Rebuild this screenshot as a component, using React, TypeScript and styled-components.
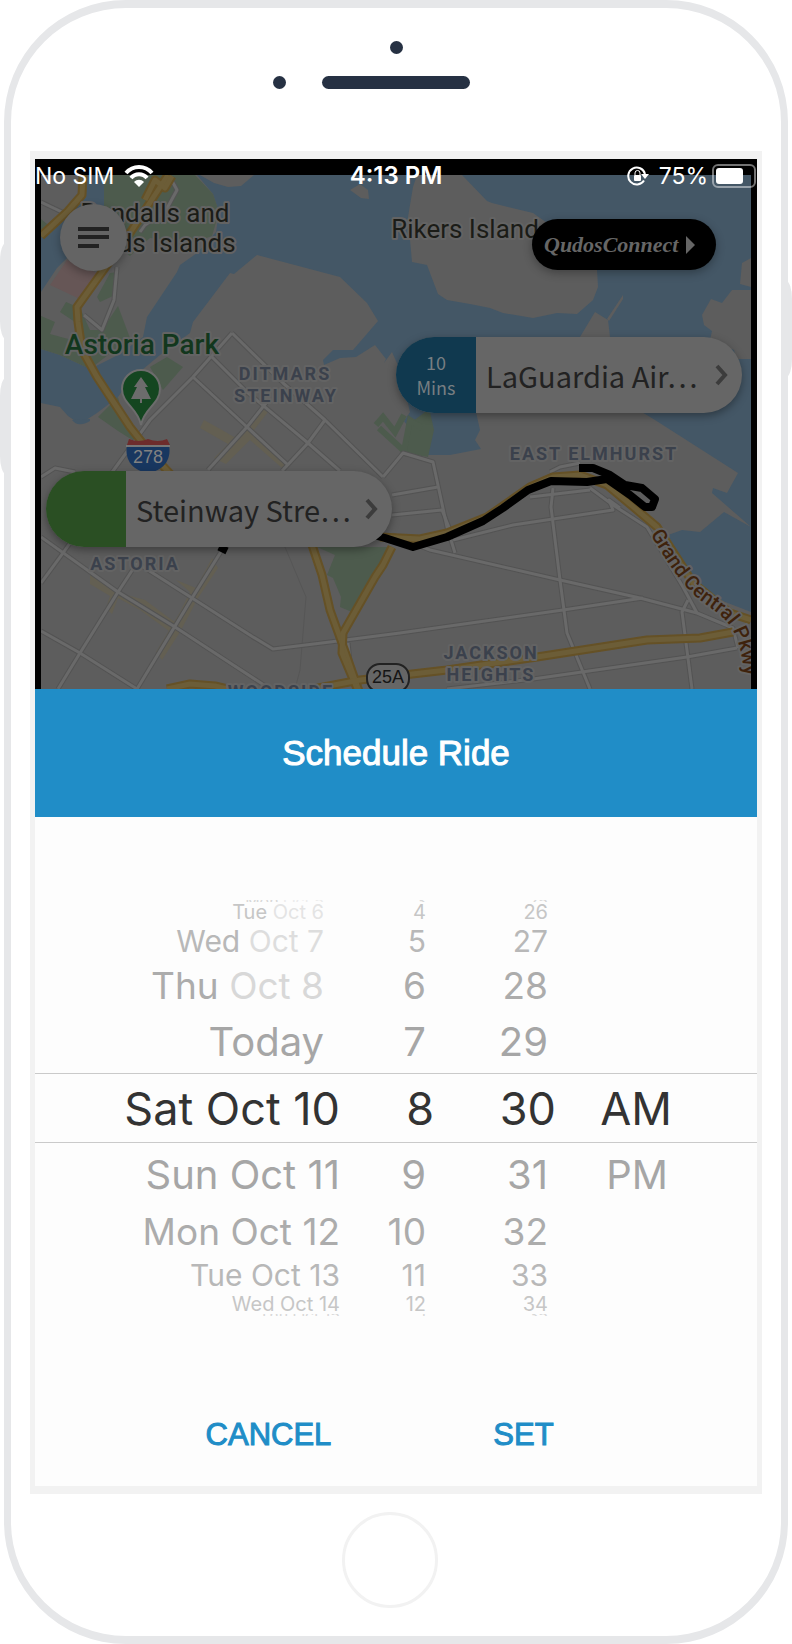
import styled, { createGlobalStyle } from 'styled-components';

interface WheelItem {
  text: string;
  past?: string;
}

interface WheelData {
  label: string;
  insetAbove: number;
  insetBelow: number;
  items: WheelItem[];
}

// items run from five rows above the selection to five rows below it
const wheels: WheelData[] = [
  {
    label: 'Date',
    insetAbove: 16,
    insetBelow: 0,
    items: [
      { text: 'Mon', past: 'Oct 5' },
      { text: 'Tue', past: 'Oct 6' },
      { text: 'Wed', past: 'Oct 7' },
      { text: 'Thu', past: 'Oct 8' },
      { text: 'Today' },
      { text: 'Sat Oct 10' },
      { text: 'Sun Oct 11' },
      { text: 'Mon Oct 12' },
      { text: 'Tue Oct 13' },
      { text: 'Wed Oct 14' },
      { text: 'Thu Oct 15' }
    ]
  },
  {
    label: 'Hour',
    insetAbove: 8,
    insetBelow: 8,
    items: ['3', '4', '5', '6', '7', '8', '9', '10', '11', '12', '1'].map((text) => ({ text }))
  },
  {
    label: 'Minute',
    insetAbove: 8,
    insetBelow: 8,
    items: ['25', '26', '27', '28', '29', '30', '31', '32', '33', '34', '35'].map((text) => ({ text }))
  },
  {
    label: 'AM or PM',
    insetAbove: 4,
    insetBelow: 4,
    items: ['', '', '', '', '', 'AM', 'PM', '', '', '', ''].map((text) => ({ text }))
  }
];

const rowHeights = [70, 63, 50, 38, 20, 2];
const rowSizes = [45, 40, 37, 30, 20, 16];
const rowColors = ['#333333', '#a6a6a6', '#acacac', '#b8b8b8', '#c6c6c6', '#d8d8d8'];

const water = '#445766';
const land = '#5d5d5d';
const green = '#4d5b4d';

const landShapes = [
  'M41 175H84L82 195 68 209 41 230Z',
  'M104 175H197L213 194 219 212 216 232 197 253 180 265 177 272 147 317 143 337 118 355 90 369 60 355 41 349V292L57 268 75 250 104 225Z',
  'M41 403 60 407 68 416 80 424 97 413 118 397 130 380 160 355 190 333 193 322 230 273 234 274 257 255 340 277 367 303 378 321 353 350H333L323 360 324 365 340 358 356 357 375 345 386 359 384 363 392 352 400 370 410 412 404 421 428 455 450 455 481 449 475 440 480 430 476 412V380L580 337 595 312 608 320 610 337 630 405 655 420 738 473 727 493 713 488 712 493 751 527 724 512 700 532 682 530 668 535 690 575 705 590 720 600 751 612V689H41Z',
  'M417 175H462L487 201 492 203 533 213 557 230 597 270 598 287 593 300 577 314 557 313 533 318 503 313 490 308 470 304 447 300 438 294 427 265 412 262 408 217 413 187Z',
  'M200 175 214 183 228 187 241 186 254 175Z',
  'M350 190 360 184 368 190 369 199 361 198Z',
  'M751 258 742 263 740 284 751 287Z',
  'M751 290H732L722 303 711 299 702 315 704 325 712 331 710 340 734 350 736 359H751Z',
  'M607 319 623 295V299L609 321Z'
];

const parks = [
  'M104 175H195L213 194 219 212 212 236 195 242 150 238 130 256 122 250 104 222Z',
  'M41 219 52 228 41 238Z',
  'M41 316 55 322 50 334 72 340 78 324 60 312 66 302 80 308 90 330 102 330 118 306 130 338 90 369 60 355 41 349Z',
  'M97 297 110 273 118 272 113 296 100 302Z',
  'M150 367 167 357 183 367 163 390Z',
  'M98 417 118 397 124 422 142 446 118 431Z',
  'M317 547H388L380 567 352 612 340 607 341 597 333 578 327 575 335 555Z',
  'M425 412H430L434 430 428 457 404 453 408 425Z'
];

const plazas = [
  'M204 420 222 430 234 437 248 425 260 408 268 412 254 430 290 465 282 468 250 440 226 464 214 458 228 444 200 428Z',
  'M90 575 116 592 145 600 180 626 176 636 140 610 118 598 112 614 106 608 110 596 90 584Z',
  'M212 558 218 568 198 598 180 632 162 660 156 652 180 612 190 592 176 580 196 588Z'
];

const streets = [
  'M41 537 118 592 175 627 270 689',
  'M137 563 192 598 253 637 273 649 330 642 400 633 563 610 643 598',
  'M222 550 192 598 137 689',
  'M137 563 118 592 80 653 58 689',
  'M70 543 63 553 41 583',
  'M41 631 80 653 137 689',
  'M232 333 283 383 325 420 383 477',
  'M232 333 193 377 150 420 105 482',
  'M212 357 247 392 308 443 340 471',
  'M193 377 247 427 288 465',
  'M325 420 308 443 282 471',
  'M270 398 247 427 208 470',
  'M383 477 403 453 433 462 447 527 455 553',
  'M392 495 438 487',
  'M392 515 442 510 452 535',
  'M392 535 430 550 560 580 640 598 697 613 733 628 738 648',
  'M453 540 513 525 613 510 609 500 620 508',
  'M553 488 551 507 560 580 567 633 590 689',
  'M590 488 613 505 647 527 683 587 697 613',
  'M688 600 682 612 692 689',
  'M447 689 533 679 687 657 737 648',
  'M530 497 590 490',
  'M550 472 560 467 580 463',
  'M41 477 55 468 75 472',
  'M41 202 64 213',
  'M348 643 352 680',
  'M171 179 177 190 165 212 145 225 140 232',
  'M117 267 114 300 102 330 84 315'
];

const highways = [
  'M41 236 68 211 82 195 83 175',
  'M168 175 130 233 100 275 77 307 78 322 82 350 97 377 130 427 148 450 174 478',
  'M145 200 155 180 165 188 172 176',
  'M312 545 322 575 330 610 347 657 359 691',
  'M392 547 383 565 375 577 343 633 342 653 358 691',
  'M167 689 190 684 215 686 240 692',
  'M313 689 360 680 447 670 537 657 647 640 700 638 733 632',
  'M380 537 420 539 447 533 487 517 530 487 553 477 580 475 607 485 637 510 657 527 693 583 730 613 751 620'
];

const ride =
  'M340 526 385 538 413 547 447 537 483 521 503 508 528 490 551 481 587 482 607 479 630 495 645 507 652 507 655 499 642 488 625 485 610 475 593 468H579';

const Map = () => (
  <MapSvg viewBox="41 175 710 514" preserveAspectRatio="xMidYMin slice" role="img" aria-label="Ride map">
    <rect x="41" y="175" width="710" height="514" fill={water} />
    {landShapes.map((d) => (
      <path key={d} d={d} fill={land} />
    ))}
    {parks.map((d) => (
      <path key={d} d={d} fill={green} />
    ))}
    <path d="M376 425 383 417 395 432 404 415M379 428 404 451 410 420 422 428" fill="none" stroke={green} strokeWidth="6" />
    <path d="M67 260 97 273 82 300 50 285Z" fill="#665656" />
    <path d="M72 420Q78 428 90 421V419Z" fill={water} />
    {plazas.map((d) => (
      <path key={d} d={d} fill="#635f52" />
    ))}
    <path d="M285 547 306 597 300 670 295 689" fill="none" stroke="#565656" />
    <g fill="none" strokeLinejoin="round">
      {streets.map((d) => (
        <path key={d} d={d} stroke="#535353" strokeWidth="5" />
      ))}
      {streets.map((d) => (
        <path key={d} d={d} stroke="#696969" strokeWidth="3" />
      ))}
      {highways.map((d) => (
        <path key={d} d={d} stroke="#655126" strokeWidth="9" />
      ))}
      {highways.map((d) => (
        <path key={d} d={d} stroke="#6c5d37" strokeWidth="5" />
      ))}
      <path d={ride} stroke="#000" strokeWidth="8" />
      <path d="M219 547 227 551" stroke="#000" strokeWidth="7" />
    </g>

    <PlaceName x="155" y="222">Randalls and</PlaceName>
    <PlaceName x="154" y="252">Wards Islands</PlaceName>
    <PlaceName x="465" y="238">Rikers Island</PlaceName>
    <ParkName x="142" y="354">Astoria Park</ParkName>
    <AreaName x="285" y="380">DITMARS</AreaName>
    <AreaName x="286" y="402">STEINWAY</AreaName>
    <AreaName x="594" y="460">EAST ELMHURST</AreaName>
    <AreaName x="135" y="570">ASTORIA</AreaName>
    <AreaName x="491" y="659">JACKSON</AreaName>
    <AreaName x="491" y="681">HEIGHTS</AreaName>
    <AreaName x="281" y="698">WOODSIDE</AreaName>

    <path id="parkway" d="M650 534C664 556 674 574 690 591 704 606 722 612 732 629 740 642 743 658 746 690" fill="none" />
    <RoadName>
      <textPath href="#parkway">Grand Central Pkwy</textPath>
    </RoadName>

    {/* park pin */}
    <path d="M141 425C138 408 122 404 122 389A19 19 0 0 1 160 389C160 404 144 408 141 425Z" fill="#144620" stroke="#6c6c6c" strokeWidth="2" />
    <path d="M141 377 148 387H145L151 399H142V403H140V399H131L137 387H134Z" fill="#6c6c6c" />

    {/* interstate shield */}
    <path d="M127 445H169C172 461 162 471 148 473C134 471 124 461 127 445Z" fill="#183760" />
    <path d="M129 439Q139 443 148 439 158 443 167 439L170 445H127Z" fill="#6d2c2c" />
    <path d="M126 446H170" stroke="#777" strokeWidth="2" />
    <ShieldText x="148" y="463" fill="#818181">278</ShieldText>

    <rect x="367" y="664" width="42" height="28" rx="13" fill="#666" stroke="#222" strokeWidth="2" />
    <ShieldText x="388" y="683" fill="#151515">25A</ShieldText>
  </MapSvg>
);

const WifiIcon = () => (
  <svg width="30" height="22" viewBox="0 0 30 22" fill="none" stroke="#fff" strokeWidth="4" aria-hidden="true">
    <path d="M2 8C9 0 21 0 28 8" />
    <path d="M7 13C11 8 19 8 23 13" />
    <path d="M10 17C13 14 17 14 20 17L15 22Z" fill="#fff" stroke="none" />
  </svg>
);

const LockIcon = () => (
  <svg width="22" height="20" viewBox="0 0 22 20" fill="none" aria-hidden="true">
    <path d="M17 14.5A8.5 8.5 0 1 1 18 8" stroke="#fff" strokeWidth="2" />
    <path d="M14 8H22L18 13Z" fill="#fff" />
    <rect x="7" y="9" width="7" height="6" rx="1" fill="#fff" />
    <path d="M8 9V7A2.5 2.5 0 0 1 13 7V9" stroke="#fff" />
  </svg>
);

const BatteryIcon = () => (
  <svg width="44" height="24" viewBox="0 0 44 24" fill="none" aria-hidden="true">
    <rect x="1" y="1" width="42" height="22" rx="5" stroke="#fff" strokeOpacity="0.45" strokeWidth="2" />
    <rect x="4" y="4" width="27" height="16" rx="3" fill="#fff" />
  </svg>
);

const Chevron = () => (
  <svg width="14" height="22" viewBox="0 0 14 22" fill="none" stroke="#3c3c3c" strokeWidth="4" aria-hidden="true">
    <path d="M2 2 10 11 2 20" />
  </svg>
);

const Wheel = ({ label, insetAbove, insetBelow, items }: WheelData) => (
  <WheelList aria-label={label}>
    {items.map((item, index) => (
      <WheelRow
        key={index}
        $distance={Math.abs(index - 5)}
        $inset={index < 5 ? insetAbove : index > 5 ? insetBelow : 0}
      >
        {item.text}
        {item.past && <Past> {item.past}</Past>}
      </WheelRow>
    ))}
  </WheelList>
);

const App = () => (
  <>
    <GlobalStyle />
    <Phone>
      <SideKey $side="left" $top={235} />
      <SideKey $side="left" $top={370} />
      <SideKey $side="right" $top={273} />
      <PhoneTop>
        <Dot />
        <SpeakerRow>
          <Dot />
          <Speaker />
        </SpeakerRow>
      </PhoneTop>
      <Screen>
        <MapPane>
          <Map />
          <StatusBar>
            <StatusGroup>
              No SIM
              <WifiIcon />
            </StatusGroup>
            <Clock>4:13 PM</Clock>
            <StatusEnd>
              <LockIcon />
              <Charge>
                75%
                <BatteryIcon />
              </Charge>
            </StatusEnd>
          </StatusBar>
          <MenuButton type="button" aria-label="Menu">
            <svg width="31" height="21" viewBox="0 0 31 21" stroke="#222" strokeWidth="4" aria-hidden="true">
              <path d="M0 2H31M0 10H31M0 19H21" />
            </svg>
          </MenuButton>
          <ConnectButton type="button">
            QudosConnect
            <svg width="9" height="18" viewBox="0 0 9 18" fill="#666" aria-hidden="true">
              <path d="M0 0 9 9 0 18Z" />
            </svg>
          </ConnectButton>
          <Dropoff type="button">
            <Tag $color="#10394f">
              <span>10</span>
              <span>Mins</span>
            </Tag>
            <StopName>LaGuardia Air…</StopName>
            <Chevron />
          </Dropoff>
          <Pickup type="button">
            <Tag $color="#2a4f23" />
            <StopName>Steinway Stre…</StopName>
            <Chevron />
          </Pickup>
        </MapPane>
        <Title>Schedule Ride</Title>
        <Picker>
          {wheels.map((wheel) => (
            <Wheel key={wheel.label} {...wheel} />
          ))}
        </Picker>
        <Actions>
          <ActionButton type="button">CANCEL</ActionButton>
          <ActionButton type="button">SET</ActionButton>
        </Actions>
      </Screen>
      <PhoneBottom>
        <HomeButton type="button" aria-label="Home" />
      </PhoneBottom>
    </Phone>
  </>
);

export default App;

const GlobalStyle = createGlobalStyle`
  *,
  *::after {
    box-sizing: border-box;
  }

  body {
    margin: 0;
    background: #fff;
    font-family: Inter, 'Liberation Sans', sans-serif;
  }

  button {
    margin: 0;
    padding: 0;
    border: 0;
    background: none;
    cursor: pointer;
  }
`;

const Phone = styled.main`
  position: relative;
  margin: 0 4px;
  border: solid #e6e7e9;
  border-width: 8px 7px;
  border-radius: 122px;
  background: #fff;
`;

const SideKey = styled.span<{ $side: 'left' | 'right'; $top: number }>`
  position: absolute;
  top: ${({ $top }) => $top}px;
  ${({ $side }) => $side}: -11px;
  width: 6px;
  height: 96px;
  border-radius: ${({ $side }) => ($side === 'left' ? '6px 0 0 6px / 18px 0 0 18px' : '0 6px 6px 0 / 0 18px 18px 0')};
  background: #e6e7e9;
`;

const PhoneTop = styled.div`
  display: flex;
  flex-direction: column;
  align-items: center;
  gap: 22px;
  height: 143px;
  padding-top: 33px;
`;

const Dot = styled.span`
  width: 13px;
  height: 13px;
  border-radius: 50%;
  background: #263143;
`;

const SpeakerRow = styled.div`
  display: grid;
  grid-template-columns: 1fr auto 1fr;
  column-gap: 36px;
  width: 100%;

  ${Dot} {
    justify-self: end;
  }
`;

const Speaker = styled.span`
  width: 148px;
  height: 13px;
  border-radius: 7px;
  background: #263143;
`;

const Screen = styled.section`
  margin: 0 19px;
  border: solid #f2f2f2;
  border-width: 8px 5px;
  background: #fdfdfd;
`;

const MapPane = styled.div`
  position: relative;
  height: 530px;
  overflow: hidden;
  background: #000;
`;

const MapSvg = styled.svg`
  position: absolute;
  top: 16px;
  left: 6px;
  width: calc(100% - 12px);
  height: 514px;
`;

const mapHalo = `
  paint-order: stroke;
  stroke: #636363;
  stroke-width: 4px;
  stroke-linejoin: round;
`;

const PlaceName = styled.text`
  ${mapHalo}
  font: 26px Roboto, sans-serif;
  text-anchor: middle;
  fill: #1b1c17;
`;

const ParkName = styled.text`
  ${mapHalo}
  font: 500 28px Roboto, sans-serif;
  text-anchor: middle;
  fill: #12371d;
`;

const AreaName = styled.text`
  ${mapHalo}
  font: 700 18px Roboto, sans-serif;
  letter-spacing: 2px;
  text-anchor: middle;
  fill: #3b414c;
`;

const RoadName = styled.text`
  ${mapHalo}
  font: 500 20px Roboto, sans-serif;
  fill: #3e220c;
`;

const ShieldText = styled.text`
  font: 18px 'Liberation Sans', sans-serif;
  text-anchor: middle;
`;

const StatusBar = styled.div`
  position: relative;
  display: grid;
  grid-template-columns: 1fr auto 1fr;
  align-items: center;
  height: 34px;
  color: #fff;
  font-size: 23px;
  line-height: 28px;
`;

const StatusGroup = styled.div`
  display: flex;
  align-items: center;
  gap: 10px;
`;

const StatusEnd = styled(StatusGroup)`
  justify-content: flex-end;
  padding-right: 1px;
`;

const Charge = styled.span`
  display: flex;
  align-items: center;
  gap: 4px;
`;

const Clock = styled.span`
  font-size: 24px;
  font-weight: 600;
`;

const MenuButton = styled.button`
  position: absolute;
  top: 45px;
  left: 25px;
  display: flex;
  align-items: center;
  justify-content: center;
  width: 67px;
  height: 67px;
  border-radius: 50%;
  background: #646464;
  box-shadow: 0 3px 8px rgba(0, 0, 0, 0.3);
`;

const ConnectButton = styled.button`
  position: absolute;
  top: 60px;
  right: 41px;
  display: flex;
  align-items: center;
  justify-content: space-between;
  width: 184px;
  height: 51px;
  padding: 0 21px 0 12px;
  border-radius: 26px;
  background: #000;
  box-shadow: 0 3px 10px rgba(0, 0, 0, 0.3);
  color: #666;
  font: italic 700 22px 'Liberation Serif', serif;
`;

const StopPill = styled.button`
  position: absolute;
  display: flex;
  align-items: center;
  width: 346px;
  height: 76px;
  padding-right: 13px;
  overflow: hidden;
  border-radius: 38px;
  background: #666;
  box-shadow: 0 3px 8px rgba(0, 0, 0, 0.35);
  color: #222;
  font-family: 'Noto Sans CJK SC', 'Noto Sans', sans-serif;
  text-align: left;
`;

const Dropoff = styled(StopPill)`
  top: 178px;
  right: 15px;
`;

const Pickup = styled(StopPill)`
  top: 312px;
  left: 11px;
`;

const Tag = styled.span<{ $color: string }>`
  display: flex;
  flex: 0 0 80px;
  flex-direction: column;
  align-items: center;
  justify-content: center;
  height: 100%;
  background: ${({ $color }) => $color};
  color: #777e82;
  font-size: 18px;
  line-height: 25px;
`;

const StopName = styled.span`
  flex: 1;
  padding-left: 10px;
  font-size: 29px;
  line-height: 40px;
  white-space: nowrap;
`;

const Title = styled.h1`
  margin: 0;
  background: #208dc7;
  color: #fff;
  font: 35px/128px 'Liberation Sans', Arial, sans-serif;
  text-align: center;
  -webkit-text-stroke: 1px #fff;
`;

const Picker = styled.div`
  position: relative;
  display: grid;
  grid-template-columns: 305fr 94fr 122fr 116fr 85fr;
  padding-top: 83px;

  /* selection band */
  &::after {
    content: '';
    position: absolute;
    top: 256px;
    right: 0;
    left: 0;
    height: 70px;
    border: solid #cacaca;
    border-width: 1px 0;
  }
`;

const WheelList = styled.ul`
  margin: 0;
  padding: 0;
  list-style: none;
`;

const Past = styled.span`
  opacity: 0.45;
`;

const WheelRow = styled.li<{ $distance: number; $inset: number }>`
  display: flex;
  align-items: center;
  justify-content: flex-end;
  height: ${({ $distance }) => rowHeights[$distance]}px;
  padding-right: ${({ $inset }) => $inset}px;
  overflow: ${({ $distance }) => ($distance === 5 ? 'hidden' : 'visible')};
  color: ${({ $distance }) => rowColors[$distance]};
  font-size: ${({ $distance }) => rowSizes[$distance]}px;
  line-height: 1;
  white-space: pre;
`;

const Actions = styled.div`
  display: grid;
  grid-template-columns: 1fr 1fr;
  padding: 100px 106px 32px;
`;

const ActionButton = styled.button`
  color: #208dc7;
  font: 31px/38px 'Liberation Sans', Arial, sans-serif;
  -webkit-text-stroke: 1px #208dc7;
`;

const PhoneBottom = styled.div`
  display: flex;
  justify-content: center;
  padding: 18px 12px 28px 0;
`;

const HomeButton = styled.button`
  width: 96px;
  height: 96px;
  border: 3px solid #f2f2f2;
  border-radius: 50%;
`;
